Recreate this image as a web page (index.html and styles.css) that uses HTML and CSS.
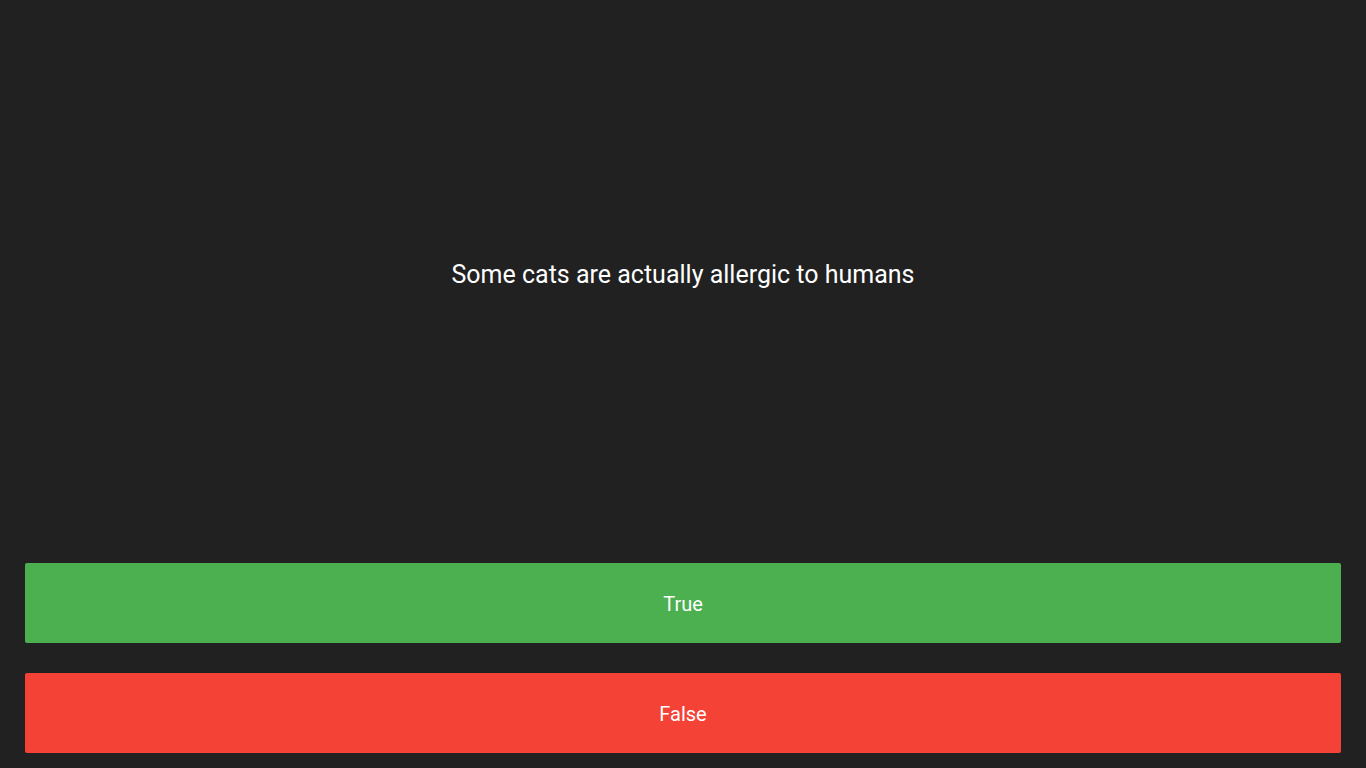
FILE: index.html
```html
<!DOCTYPE html>
<html lang="en">
<head>
<meta charset="utf-8">
<title>Quiz</title>
<link rel="stylesheet" href="styles.css">
</head>
<body>
<main class="quiz">
  <section class="question">
    <p class="question-text">Some cats are actually allergic to humans</p>
  </section>
  <section class="answers">
    <button class="answer answer-true">True</button>
    <button class="answer answer-false">False</button>
  </section>
</main>
</body>
</html>
```

FILE: styles.css
```css
html, body {
  margin: 0;
  padding: 0;
  height: 100%;
  background: #212121;
}

body {
  font-family: Roboto, "Noto Sans", sans-serif;
  color: #ffffff;
}

.quiz {
  height: 100vh;
  display: flex;
  flex-direction: column;
  box-sizing: border-box;
}

.question {
  flex: 1;
  display: flex;
  align-items: center;
  justify-content: center;
  padding-bottom: 14px;
}

.question-text {
  margin: 0;
  font-size: 25px;
  line-height: 30px;
}

.answers {
  display: flex;
  flex-direction: column;
  gap: 30px;
  padding: 0 25px 15px;
}

.answer {
  height: 80px;
  padding: 2px 0 0;
  border: none;
  border-radius: 2px;
  color: #ffffff;
  font-family: Roboto, "Noto Sans", sans-serif;
  font-size: 20px;
  cursor: pointer;
}

.answer-true {
  background: #4caf50;
}

.answer-false {
  background: #f44336;
}
```
